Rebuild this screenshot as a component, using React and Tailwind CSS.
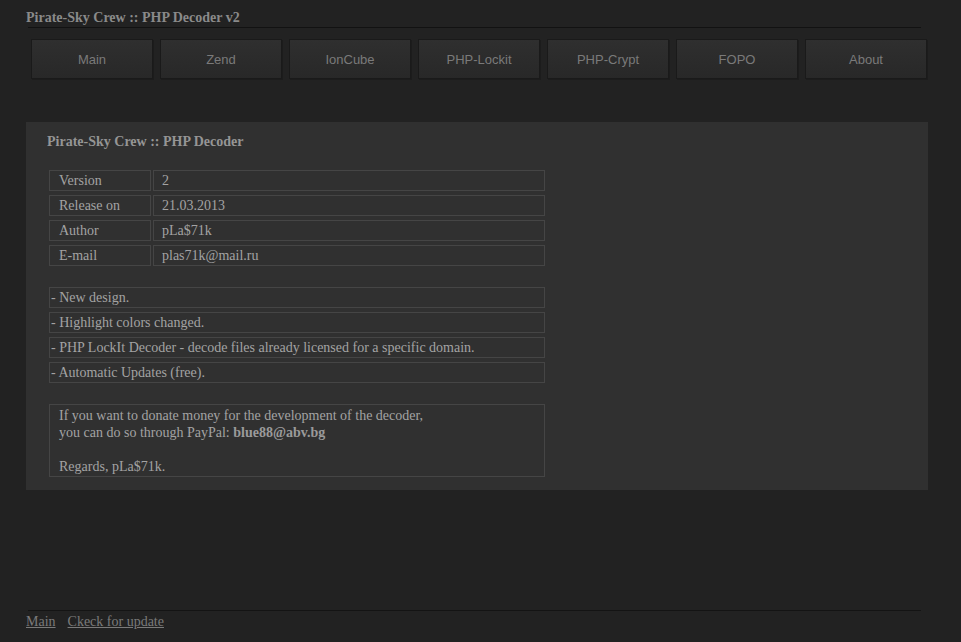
import React from "react";

const serif = { fontFamily: '"Liberation Serif", "Times New Roman", serif' };

const navItems = ["Main", "Zend", "IonCube", "PHP-Lockit", "PHP-Crypt", "FOPO", "About"];

const info = [
  ["Version", "2"],
  ["Release on", "21.03.2013"],
  ["Author", "pLa$71k"],
  ["E-mail", "plas71k@mail.ru"],
];

const changes = [
  "- New design.",
  "- Highlight colors changed.",
  "- PHP LockIt Decoder - decode files already licensed for a specific domain.",
  "- Automatic Updates (free).",
];

const App = () => {
  return (
    <div className="w-[961px] h-[642px] bg-[#222222] overflow-hidden text-[14px]" style={serif}>
      {/* title */}
      <div className="pt-[9px] pl-[26px]">
        <div className="font-bold text-[#8a8a8a] leading-[17px]">Pirate-Sky Crew :: PHP Decoder v2</div>
        <div className="ml-[2px] w-[893px] h-px bg-[#121212] mt-px" />
      </div>

      {/* nav */}
      <div className="flex gap-[7px] pl-[31px] mt-[11px]">
        {navItems.map((item) => (
          <div
            key={item}
            className="w-[122px] h-[40px] pt-px flex items-center justify-center border border-[#1a1a1a] bg-gradient-to-b from-[#2f2f2f] to-[#282828] text-[13px] text-[#7a7a7a] shadow-[1px_1px_0_#1c1c1c]"
            style={{ fontFamily: '"Liberation Sans", Arial, sans-serif' }}
          >
            {item}
          </div>
        ))}
      </div>

      {/* panel */}
      <div className="ml-[26px] mt-[43px] w-[902px] bg-[#303030] pt-[11px] pb-[13px] pl-[21px]">
        <div className="font-bold text-[#959595] leading-[17px]">Pirate-Sky Crew :: PHP Decoder</div>

        <div className="mt-[20px] ml-[2px] w-[496px] flex flex-col gap-[4px] text-[#a3a3a3]">
          {info.map(([k, v]) => (
            <div key={k} className="flex gap-[2px]">
              <div className="w-[102px] h-[21px] border border-[#454545] pl-[9px] leading-[19px]">{k}</div>
              <div className="flex-1 h-[21px] border border-[#454545] pl-[8px] leading-[19px]">{v}</div>
            </div>
          ))}
        </div>

        <div className="mt-[21px] ml-[2px] w-[496px] flex flex-col gap-[4px] text-[#a3a3a3]">
          {changes.map((c) => (
            <div key={c} className="h-[21px] border border-[#454545] pl-[1px] leading-[19px]">{c}</div>
          ))}
        </div>

        <div className="mt-[21px] ml-[2px] w-[496px] border border-[#454545] pl-[9px] pt-[2px] pb-[1px] text-[#a3a3a3] leading-[17px]">
          <div>If you want to donate money for the development of the decoder,</div>
          <div>
            you can do so through PayPal: <span className="font-bold text-[#9a9a9a]">blue88@abv.bg</span>
          </div>
          <div className="h-[17px]" />
          <div>Regards, pLa$71k.</div>
        </div>
      </div>

      {/* footer */}
      <div className="mt-[120px] pl-[26px]">
        <div className="ml-[2px] w-[893px] h-px bg-[#141414]" />
        <div className="flex gap-[12px] mt-[2px] text-[#7a7a7a] leading-[17px]">
          <a href="#" className="underline">Main</a>
          <a href="#" className="underline">Ckeck for update</a>
        </div>
      </div>
    </div>
  );
};

export default App;
